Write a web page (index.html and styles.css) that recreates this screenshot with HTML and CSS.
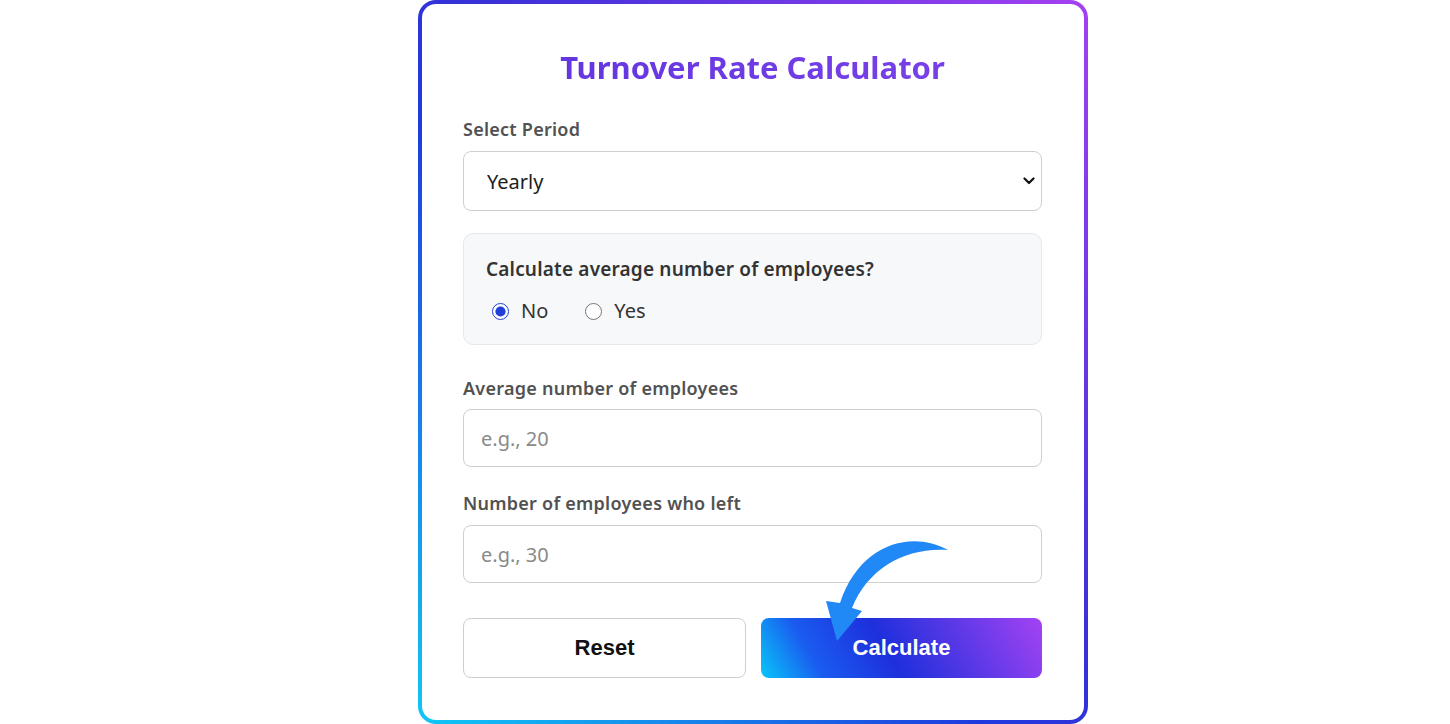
FILE: index.html
```html
<!DOCTYPE html>
<html lang="en">
<head>
<meta charset="utf-8">
<title>Turnover Rate Calculator</title>
<link rel="stylesheet" href="styles.css">
</head>
<body>
<main class="card">
  <h1 class="title">Turnover Rate Calculator</h1>

  <label class="label" for="period">Select Period</label>
  <div class="select-wrap">
    <select id="period" class="select">
      <option>Yearly</option>
      <option>Quarterly</option>
      <option>Monthly</option>
    </select>
    <svg class="chevron" viewBox="0 0 12 8" width="12" height="8"><path d="M1.5 1.5 L6 6 L10.5 1.5" fill="none" stroke="#111" stroke-width="2.2" stroke-linecap="round" stroke-linejoin="round"/></svg>
  </div>

  <div class="panel">
    <p class="question">Calculate average number of employees?</p>
    <div class="radios">
      <label class="radio"><input type="radio" name="avg" checked><span>No</span></label>
      <label class="radio"><input type="radio" name="avg"><span>Yes</span></label>
    </div>
  </div>

  <label class="label label-avg" for="avg">Average number of employees</label>
  <input id="avg" class="input" type="text" placeholder="e.g., 20">

  <label class="label label-left" for="left">Number of employees who left</label>
  <input id="left" class="input" type="text" placeholder="e.g., 30">

  <div class="actions">
    <button class="btn btn-reset" type="button">Reset</button>
    <button class="btn btn-calc" type="button">Calculate</button>
  </div>

  <svg class="pointer" viewBox="800 530 160 115" width="160" height="115">
    <path d="M948,550 C912,530 860,543 840,603 L826,601 L837,641 L862,611 L852,608 C868,568 906,547 948,550 Z" fill="#2189f5"/>
  </svg>
</main>
</body>
</html>
```

FILE: styles.css
```css
html, body {
  margin: 0;
  padding: 0;
  background: #ffffff;
}

body {
  font-family: "Noto Sans", "Open Sans", Arial, sans-serif;
  color: #333;
}

.card {
  position: relative;
  box-sizing: border-box;
  width: 670px;
  height: 724px;
  margin: 0 0 0 418px;
  padding: 45px 42px 0 41px;
  border: 4px solid transparent;
  border-radius: 18px;
  background:
    linear-gradient(#fff, #fff) padding-box,
    linear-gradient(to top right, #10c8f6 0%, #1e3ade 42%, #3a30d8 55%, #a440f2 100%) border-box;
  display: flex;
  flex-direction: column;
}

.title {
  margin: 0 0 33px;
  font-size: 31px;
  line-height: 36px;
  font-weight: 700;
  text-align: center;
  background: linear-gradient(90deg, #5e34de, #7e42ea);
  -webkit-background-clip: text;
  background-clip: text;
  color: transparent;
}

.label {
  display: block;
  margin: 0 0 11px;
  font-size: 18px;
  line-height: 22px;
  font-weight: 600;
  letter-spacing: 0.25px;
  color: #525252;
}

.label-avg { margin-top: 32px; margin-bottom: 10px; }
.label-left { margin-top: 25px; }

.select-wrap {
  position: relative;
}

.select {
  appearance: none;
  -webkit-appearance: none;
  box-sizing: border-box;
  width: 100%;
  height: 60px;
  padding: 0 40px 0 23px;
  border: 1.5px solid #cfcfcf;
  border-radius: 8px;
  background: #fff;
  font-family: inherit;
  font-size: 20px;
  color: #1d1d1d;
  outline: none;
}

.chevron {
  position: absolute;
  right: 7px;
  top: 26px;
  pointer-events: none;
}

.panel {
  margin-top: 22px;
  box-sizing: border-box;
  height: 112px;
  padding: 23px 22px 0;
  border: 1px solid #e6e8ec;
  border-radius: 10px;
  background: #f7f8fa;
}

.question {
  margin: 0;
  font-size: 19px;
  line-height: 24px;
  font-weight: 600;
  letter-spacing: 0.18px;
  color: #333;
}

.radios {
  margin-top: 18px;
  display: flex;
  gap: 37px;
  padding-left: 6px;
}

.radio {
  display: flex;
  align-items: center;
  gap: 12px;
  font-size: 20px;
  line-height: 24px;
  color: #333;
}

.radio input {
  margin: 0;
  width: 17px;
  height: 17px;
  accent-color: #1f3fd6;
}

.input {
  box-sizing: border-box;
  width: 100%;
  height: 58px;
  padding: 0 17px;
  border: 1.5px solid #cfcfcf;
  border-radius: 8px;
  background: #fff;
  font-family: inherit;
  font-size: 20px;
  color: #222;
  outline: none;
}

.input::placeholder {
  color: #8a8a8a;
}

.actions {
  margin-top: 35px;
  display: flex;
  gap: 15px;
}

.btn {
  flex: 1;
  height: 60px;
  border-radius: 8px;
  font-family: "Liberation Sans", Arial, sans-serif;
  font-size: 22px;
  font-weight: 700;
  cursor: pointer;
}

.btn-reset {
  background: #fff;
  border: 1.5px solid #cfcfcf;
  color: #111;
}

.btn-calc {
  border: none;
  color: #fff;
  background: linear-gradient(60deg, #08c6f8 0%, #1a5cf0 20%, #1e2fdc 45%, #5a38e6 70%, #a443f3 100%);
}

.pointer {
  position: absolute;
  left: 378px;
  top: 526px;
}
```
